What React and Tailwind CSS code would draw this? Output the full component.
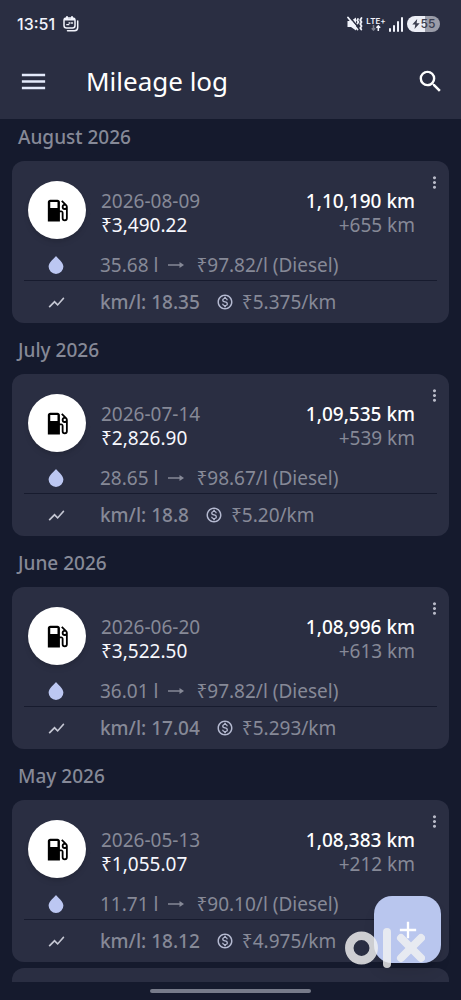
import {
  MdAdd,
  MdLocalGasStation,
  MdMenu,
  MdMoreVert,
  MdOutlineMonetizationOn,
  MdSearch,
  MdShowChart,
} from "react-icons/md";

const months = [
  {
    title: "August 2026",
    entries: [
      { date: "2026-08-09", cost: "₹3,490.22", odometer: "1,10,190 km", trip: "+655 km", volume: "35.68 l", price: "₹97.82/l (Diesel)", economy: "km/l: 18.35", perKm: "₹5.375/km" },
    ],
  },
  {
    title: "July 2026",
    entries: [
      { date: "2026-07-14", cost: "₹2,826.90", odometer: "1,09,535 km", trip: "+539 km", volume: "28.65 l", price: "₹98.67/l (Diesel)", economy: "km/l: 18.8", perKm: "₹5.20/km" },
    ],
  },
  {
    title: "June 2026",
    entries: [
      { date: "2026-06-20", cost: "₹3,522.50", odometer: "1,08,996 km", trip: "+613 km", volume: "36.01 l", price: "₹97.82/l (Diesel)", economy: "km/l: 17.04", perKm: "₹5.293/km" },
    ],
  },
  {
    title: "May 2026",
    entries: [
      { date: "2026-05-13", cost: "₹1,055.07", odometer: "1,08,383 km", trip: "+212 km", volume: "11.71 l", price: "₹90.10/l (Diesel)", economy: "km/l: 18.12", perKm: "₹4.975/km" },
    ],
  },
];

function StatusBar() {
  return (
    <div className="flex h-12 items-center justify-between pl-[17px] pr-[21px] text-[#f1f3fb]">
      <div className="flex items-center gap-2">
        <span className="font-['Inter',sans-serif] text-[16px] font-medium">13:51</span>
        <svg width="16" height="16" viewBox="0 0 16 16" fill="none" stroke="currentColor" strokeWidth="1.5" strokeLinecap="round">
          <rect x="1" y="2" width="11" height="10" rx="2.5" />
          <path d="M2 3.5h9M4 1v2M9 1v2" strokeWidth="2" />
          <path d="M3.8 8.7h2M6 7h1M8.500 7h1" strokeWidth="1.3" />
          <path d="M14.7 5v6.5a3.2 3.2 0 0 1-3.2 3.2H4.5" />
        </svg>
      </div>

      <div className="flex items-center gap-1">
        {/* muted + vibrate */}
        <svg width="16" height="16" viewBox="0 0 16 16" fill="none" stroke="currentColor" strokeLinecap="round">
          <path d="M.5 5h3.500L9 1.500v13L4 11H.5z" fill="currentColor" stroke="none" />
          <path d="M2.500 .8l10 12" stroke="#2a2e42" strokeWidth="1.5" />
          <path d="M1 1.500l9.500 12" strokeWidth="1.8" />
          <path d="M11 3l-.8 1.500 1.200 1.500-1 1.500M14.500 2l-1.200 2 1.200 2-1.200 2 1.200 2-1.200 2 1 1.500" strokeWidth="1.8" />
        </svg>
        <div className="flex w-[18px] flex-col items-center">
          <span className="font-['Inter',sans-serif] text-[8px] font-semibold leading-[8px]">LTE+</span>
          <svg width="10" height="6" viewBox="0 0 10 6" fill="none" stroke="currentColor" strokeWidth="1.5">
            <path d="M2.5 0v5M.8 3.2l1.7 1.9 1.7-1.9" opacity=".4" />
            <path d="M7.3 6V1M5.4 2.8L7.3.9l1.9 1.9" />
          </svg>
        </div>
        <svg width="14" height="15" viewBox="0 0 14 15" fill="currentColor">
          <rect x="0" y="11" width="2" height="4" rx="1" />
          <rect x="4" y="8" width="2" height="7" rx="1" />
          <rect x="8" y="4" width="2" height="11" rx="1" />
          <rect x="12" y="0" width="2" height="15" rx="1" />
        </svg>
        <div className="flex h-4 w-[33px] items-center justify-center gap-px rounded-full bg-linear-to-r from-[#eceef6] from-55% to-[#9a9ca8] to-55% text-[#3b3e50]">
          <svg width="8" height="10" viewBox="0 0 8 10" fill="currentColor">
            <path d="M5.2 0L.3 5.6h3L2.5 10l5.2-5.8H4.6z" />
          </svg>
          <span className="font-['Inter',sans-serif] text-[12px] font-medium leading-4">55</span>
        </div>
      </div>
    </div>
  );
}

function DropIcon() {
  return (
    <svg width="16" height="18" viewBox="0 0 16 18" fill="currentColor">
      <path d="M8 0C7 1.800 .6 6 .6 10.600a7.400 7.400 0 0 0 14.800 0C15.400 6 9 1.800 8 0z" />
    </svg>
  );
}

function ArrowIcon() {
  return (
    <svg width="16" height="8" viewBox="0 0 16 8" fill="none" stroke="currentColor" strokeWidth="1.5" className="ml-[10px] mr-3">
      <path d="M0 4h14" />
      <path d="M11.500 1L16 4l-4.500 3z" fill="currentColor" stroke="none" />
    </svg>
  );
}

function EntryCard({ entry }) {
  return (
    <article className="relative rounded-xl bg-[#2a2e42] px-3 pt-5 text-[19px] text-[#868997]">
      <div className="flex pl-1">
        <div className="flex size-[58px] shrink-0 items-center justify-center rounded-full bg-white text-black shadow-md">
          <MdLocalGasStation size={29} />
        </div>
        <div className="ml-[15px] flex-1 pt-2 leading-6">
          <p>{entry.date}</p>
          <p className="text-[#f6f7fd]">{entry.cost}</p>
        </div>
        <div className="pr-[22px] pt-2 text-right leading-6">
          <p className="font-medium text-white">{entry.odometer}</p>
          <p>{entry.trip}</p>
        </div>
      </div>

      <div className="mt-[11px] flex h-[30px] items-center">
        <div className="flex w-16 justify-center text-[#bcc7f2]">
          <DropIcon />
        </div>
        <span className="ml-3">{entry.volume}</span>
        <ArrowIcon />
        <span>{entry.price}</span>
      </div>

      <div className="flex h-[43px] items-center border-t border-[#171b2e]">
        <div className="flex w-16 justify-center text-[#c5c7d3]">
          <MdShowChart size={19} />
        </div>
        <span className="ml-3 font-medium">{entry.economy}</span>
        <MdOutlineMonetizationOn size={18} className="ml-4 mr-2 text-[#b4b9d0]" />
        <span>{entry.perKm}</span>
      </div>

      <button aria-label="Entry options" className="absolute right-[5px] top-3 text-[#b9bbc8]">
        <MdMoreVert size={19} />
      </button>
    </article>
  );
}

export default function App() {
  return (
    <div className="relative flex h-screen flex-col overflow-hidden bg-[#151a2d] font-['Noto_Sans',sans-serif]">
      <header className="shrink-0 bg-[#2a2e42]">
        <StatusBar />
        <div className="flex h-[71px] items-center pb-1 pl-[18px] pr-4 text-white">
          <button aria-label="Open menu" className="text-[#e4eafb]">
            <MdMenu size={31} />
          </button>
          <h1 className="ml-[37px] flex-1 text-[26px]">Mileage log</h1>
          <button aria-label="Search">
            <MdSearch size={29} />
          </button>
        </div>
      </header>

      <main className="min-h-0 flex-1 overflow-hidden px-3">
        {months.map((month) => (
          <section key={month.title} className="mb-[9px] last-of-type:mb-[6px]">
            <h2 className="h-[42px] px-[6px] text-[19px] font-medium leading-9 text-[#868997]">
              {month.title}
            </h2>
            {month.entries.map((entry) => (
              <EntryCard key={entry.date} entry={entry} />
            ))}
          </section>
        ))}
        {/* next entry, cut off by the navigation bar */}
        <div className="h-40 rounded-xl bg-[#2a2e42]" />
      </main>

      <footer className="flex h-[18px] shrink-0 items-center justify-center">
        <div className="h-1 w-[35%] rounded-full bg-[#777b8a]" />
      </footer>

      <button
        aria-label="Add entry"
        className="absolute bottom-[37px] right-5 flex size-[67px] items-center justify-center rounded-[18px] bg-[#b9c6ee] text-white shadow-lg"
      >
        <MdAdd size={28} />
      </button>

      <svg
        role="img"
        aria-label="olx"
        className="pointer-events-none absolute bottom-[30px] right-[34px]"
        width="84"
        height="44"
        viewBox="0 0 84 44"
        fill="none"
        strokeLinecap="round"
      >
        <g stroke="#f2f2f2" opacity=".82">
          <circle cx="18.500" cy="22" r="12.200" strokeWidth="8.500" />
          <line x1="44" y1="6" x2="44" y2="38" strokeWidth="8" />
          <line x1="58" y1="12" x2="78" y2="32" strokeWidth="8" />
          <line x1="78" y1="12" x2="58" y2="32" strokeWidth="8" />
        </g>
      </svg>
    </div>
  );
}
